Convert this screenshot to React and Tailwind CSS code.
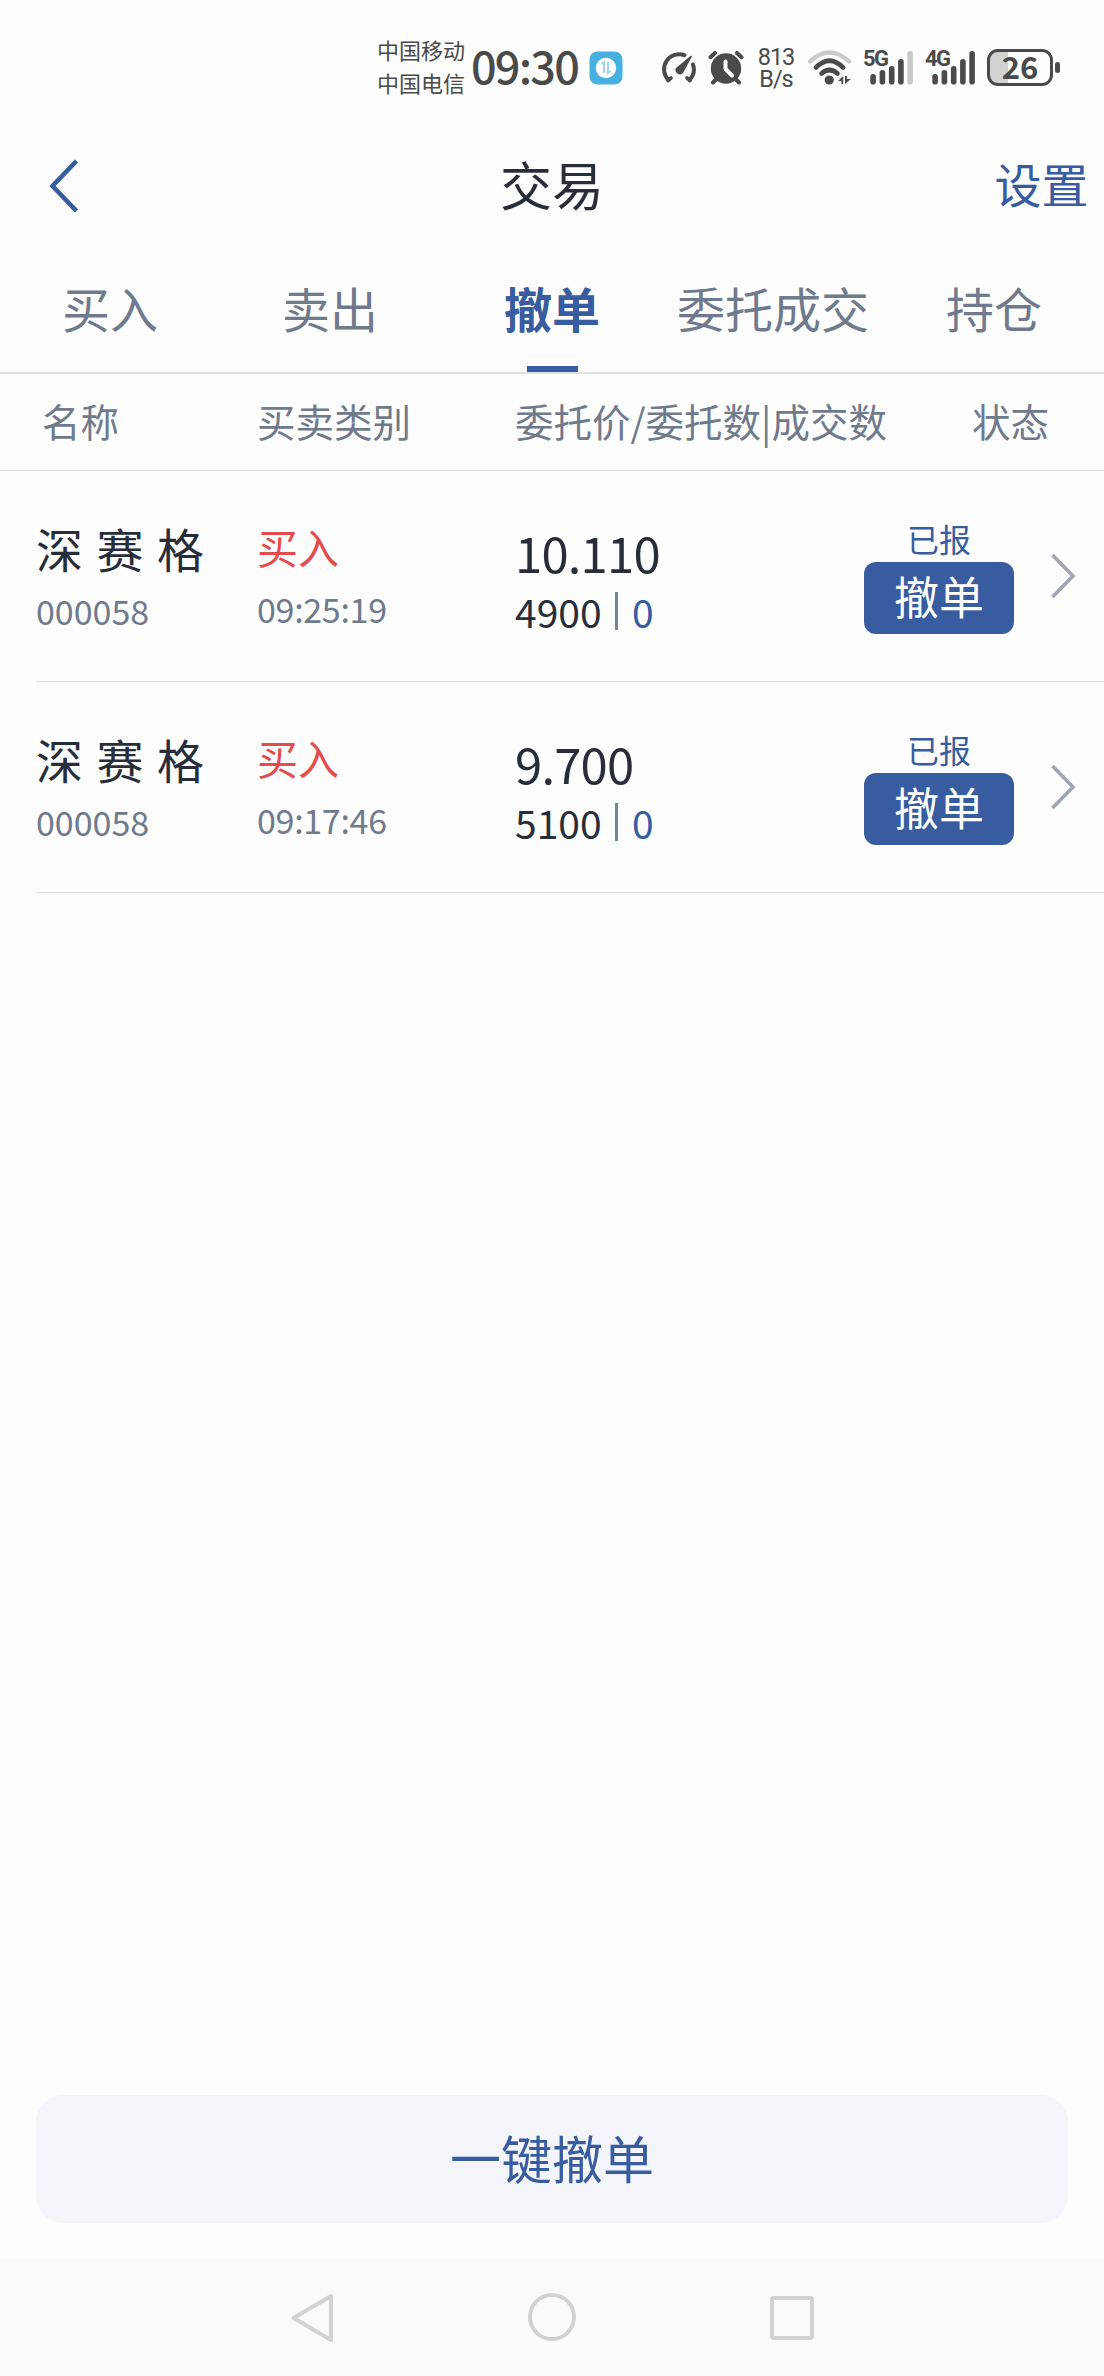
import React, { useState } from 'react';

const tabs = [
  { name: '买入', className: 'w-[96px] ml-[62px]' },
  { name: '卖出', className: 'w-[96px] ml-[124px]' },
  { name: '撤单', className: 'w-[96px] ml-[126px]' },
  { name: '委托成交', className: 'w-[192px] ml-[77px]' },
  { name: '持仓', className: 'w-[96px] ml-[77px]' },
];

const orders = [
  { id: 1, name: '深 赛 格', code: '000058', side: '买入', time: '09:25:19', price: '10.110', amount: '4900', filled: '0', status: '已报' },
  { id: 2, name: '深 赛 格', code: '000058', side: '买入', time: '09:17:46', price: '9.700', amount: '5100', filled: '0', status: '已报' },
];

const GaugeIcon = () => (
  <svg className="w-[36px] h-[34px] ml-[38px] mt-[51px]" viewBox="0 0 36 34" fill="none" stroke="#4a4a4a" strokeLinecap="round">
    <path d="M23.5 4.1A15.2 15.2 0 0 0 7.2 28.8" strokeWidth="4" />
    <path d="M32 13.5A15.2 15.2 0 0 1 28.6 28.8" strokeWidth="4" />
    <path d="M7 29.5l3-2.5M29 29.5l-3-2.5" strokeWidth="3.6" />
    <path d="M30 5.5L21.6 21.2A3.6 3.6 0 0 1 15.5 17.6z" fill="#4a4a4a" strokeWidth="1.6" strokeLinejoin="round" />
  </svg>
);

const AlarmIcon = () => (
  <svg className="w-[36px] h-[34px] ml-[11px] mt-[51px]" viewBox="0 0 36 34" fill="none" strokeLinecap="round">
    <circle cx="18" cy="17.5" r="15.2" fill="#4a4a4a" />
    <path d="M2.5 6.2L7 2M33.5 6.2L29 2M5 31.5l4-4M31 31.5l-4-4" stroke="#4a4a4a" strokeWidth="4" />
    <path d="M17.5 10.5v7.5l6.5 6.5" stroke="#fdfdfd" strokeWidth="4" strokeLinejoin="round" />
  </svg>
);

const WifiIcon = () => (
  <svg className="w-[46px] h-[36px] ml-[12px] mt-[50px]" viewBox="0 0 46 36" fill="none" strokeLinecap="round">
    <path d="M3 11.5Q22.5 -6.5 42 11.5" stroke="#c9c9c9" strokeWidth="4.2" />
    <path d="M9 17.5Q22.5 4 36 17.5" stroke="#4a4a4a" strokeWidth="4.6" />
    <path d="M14.5 23.5Q22.5 16.5 30.5 23.5" stroke="#4a4a4a" strokeWidth="4.6" />
    <circle cx="22.2" cy="30" r="4.6" fill="#4a4a4a" />
    <path d="M31 31l5.2-5v8h-1.8v-3zM38 26h1.8v3H44l-6 5z" fill="#4a4a4a" />
  </svg>
);

const Signal = ({ label, weak, className }) => (
  <div className={`relative w-[51px] h-[34px] mt-[51px] ${className}`}>
    <span className="absolute left-0 -top-[4px] text-[22px] leading-[24px] font-bold tracking-[-1.5px] text-[#4a4a4a] font-['Roboto',sans-serif]">
      {label}
    </span>
    <svg className="w-[51px] h-[34px]" viewBox="0 0 51 34" fill="#4a4a4a">
      <rect x="7.3" y="23" width="5.6" height="10.5" rx="2.8" />
      <rect x="16.6" y="19" width="5.6" height="14.5" rx="2.8" />
      <rect x="25.9" y="15" width="5.6" height="18.5" rx="2.8" />
      <rect x="35.1" y="8" width="5.6" height="25.5" rx="2.8" />
      <rect x="44.3" y="0" width="5.6" height="33.5" rx="2.8" fill={weak ? '#c9c9c9' : '#4a4a4a'} />
    </svg>
  </div>
);

const StatusBar = () => (
  <div className="flex items-start h-[130px] text-[#4a4a4a] whitespace-nowrap">
    <div className="w-[94px] ml-[377px] mt-[33px] text-[22px] leading-[33px]">
      <div>中国移动</div>
      <div>中国电信</div>
    </div>
    <div className="w-[108px] mt-[39px] text-[45px] leading-[52px] font-medium tracking-[-1.8px]">09:30</div>
    <svg className="w-[34px] h-[34px] ml-[10px] mt-[51px]" viewBox="0 0 34 34">
      <rect x="0.5" y="0.5" width="33" height="33" rx="8" fill="#47b0e0" />
      <circle cx="17" cy="17" r="10.2" fill="#fff" />
      <path d="M12.5 13l2.5-2v11M19 11v11l3-2" fill="none" stroke="#9fd3ef" strokeWidth="2" />
    </svg>
    <GaugeIcon />
    <AlarmIcon />
    <div className="w-[38px] ml-[13px] mt-[47px] text-center text-[23.5px] leading-[21.5px] tracking-[-1px] font-['Roboto',sans-serif]">
      <div>813</div>
      <div>B/s</div>
    </div>
    <WifiIcon />
    <Signal label="5G" weak className="ml-[10px]" />
    <Signal label="4G" className="ml-[11px]" />
    <div className="flex items-center ml-[11px] mt-[49px]">
      <div className="flex items-center justify-center w-[66px] h-[37px] rounded-[11px] border-[3px] border-[#4a4a4a] bg-linear-to-r from-[#d2d2d2] from-30% to-transparent to-30% text-[31px] leading-[31px] font-bold">
        <span className="-mt-[5px]">26</span>
      </div>
      <div className="w-[5px] h-[11px] ml-[2px] rounded-full bg-[#4a4a4a]" />
    </div>
  </div>
);

const OrderRow = ({ order }) => (
  <div className="flex items-start h-[211px] ml-[36px] border-b border-[#dddfe2] whitespace-nowrap">
    <div className="w-[221px] pt-[49px]">
      <div className="text-[47px] leading-[56px] [word-spacing:3px] text-[#272e3a]">{order.name}</div>
      <div className="mt-[10px] text-[34px] leading-[50px] text-[#6f7a8c]">{order.code}</div>
    </div>
    <div className="w-[258px] pt-[48px]">
      <div className="text-[41px] leading-[54px] text-[#e64b4b]">{order.side}</div>
      <div className="mt-[11px] text-[34px] leading-[50px] tracking-[-0.3px] text-[#6f7a8c]">{order.time}</div>
    </div>
    <div className="w-[349px] pt-[53px] text-[#272e3a]">
      <div className="text-[49px] leading-[56px] tracking-[-0.8px]">{order.price}</div>
      <div className="flex items-center h-[60px] mt-px text-[39px] leading-[60px]">
        <span className="w-[86px]">{order.amount}</span>
        <span className="w-[3px] h-[38px] ml-[14px] bg-[#79849a]" />
        <span className="ml-[14px] text-[#375ca0]">{order.filled}</span>
      </div>
    </div>
    <div className="w-[150px] pt-[48px] text-center">
      <div className="text-[32px] leading-[38px] text-[#375ca0]">{order.status}</div>
      <button className="flex justify-center w-[150px] h-[72px] mt-[5px] rounded-[12px] bg-[#375ca0] text-[45px] leading-[68px] text-white">
        撤单
      </button>
    </div>
    <svg className="w-[26px] h-[46px] ml-[36px] mt-[82px]" viewBox="0 0 26 46" fill="none" stroke="#9ea6b4" strokeWidth="3.6">
      <path d="M2.5 2L23 23L2.5 44" />
    </svg>
  </div>
);

const App = () => {
  const [activeTab, setActiveTab] = useState('撤单');

  return (
    <div className="flex flex-col w-[1104px] h-[2376px] overflow-hidden bg-[#fdfdfd] font-['Noto_Sans_CJK_SC',sans-serif]">
      <StatusBar />

      {/* Header */}
      <div className="flex items-center justify-between h-[112px] pl-[48px] pr-[15px]">
        <div className="w-[95px]">
          <svg className="w-[32px] h-[54px]" viewBox="0 0 32 54" fill="none" stroke="#375ca0" strokeWidth="4.6">
            <path d="M28.5 2L4.5 27L28.5 52" />
          </svg>
        </div>
        <h1 className="-ml-[33px] -mt-[5px] text-[52px] leading-[60px] text-[#272e3a]">交易</h1>
        <button className="w-[95px] -mt-[6px] text-[47px] leading-[60px] text-[#375ca0]">设置</button>
      </div>

      {/* Tabs */}
      <div className="flex h-[132px] border-b-2 border-[#dddfe3] whitespace-nowrap">
        {tabs.map((tab) => {
          const active = tab.name === activeTab;
          return (
            <button
              key={tab.name}
              onClick={() => setActiveTab(tab.name)}
              className={`flex flex-col items-center justify-between pt-[33px] text-[48px] leading-[64px] ${tab.className} ${active ? 'font-bold text-[#375ca0]' : 'text-[#6f7a8c]'}`}
            >
              <span>{tab.name}</span>
              {active && <span className="w-[51px] h-[6px] bg-[#375ca0]" />}
            </button>
          );
        })}
      </div>

      {/* Column titles */}
      <div className="flex h-[97px] pl-[42px] pt-[18px] border-b border-[#dddfe2] text-[38.5px] leading-[56px] text-[#6f7a8c] whitespace-nowrap">
        <span className="w-[215px]">名称</span>
        <span className="w-[258px]">买卖类别</span>
        <span className="w-[457px]">委托价/委托数|成交数</span>
        <span>状态</span>
      </div>

      {orders.map((order) => (
        <OrderRow key={order.id} order={order} />
      ))}

      <button className="flex justify-center w-[1032px] h-[128px] mt-auto mb-[36px] mx-auto rounded-[27px] bg-[#f3f5fa] text-[51px] leading-[124px] text-[#375ca0]">
        一键撤单
      </button>

      {/* System navigation */}
      <div className="flex shrink-0 items-start h-[117px] bg-[#fafafa]">
        <svg className="w-[46px] h-[54px] ml-[289px] mt-[32px]" viewBox="0 0 46 54" fill="none" stroke="#d2d2d2" strokeWidth="4" strokeLinejoin="round">
          <path d="M42 5V49L4.5 27z" />
        </svg>
        <div className="w-[48px] h-[48px] ml-[193px] mt-[34px] rounded-full border-4 border-[#d2d2d2]" />
        <div className="w-[44px] h-[44px] ml-[194px] mt-[37px] rounded-[4px] border-4 border-[#d2d2d2]" />
      </div>
    </div>
  );
};

export default App;
